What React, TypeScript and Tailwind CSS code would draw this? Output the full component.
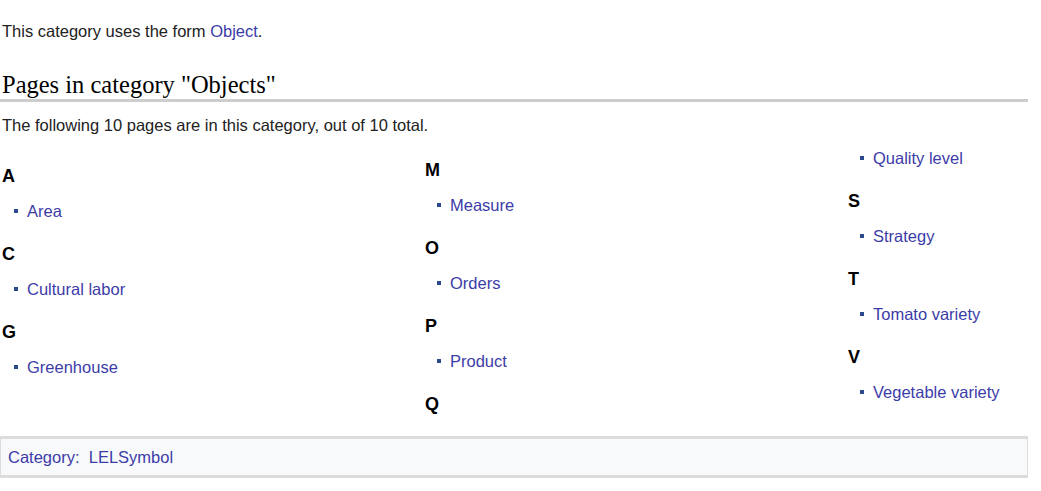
const columns: { letter?: string; items: string[] }[][] = [
  [
    { letter: "A", items: ["Area"] },
    { letter: "C", items: ["Cultural labor"] },
    { letter: "G", items: ["Greenhouse"] },
  ],
  [
    { letter: "M", items: ["Measure"] },
    { letter: "O", items: ["Orders"] },
    { letter: "P", items: ["Product"] },
    { letter: "Q", items: [] },
  ],
  [
    { items: ["Quality level"] },
    { letter: "S", items: ["Strategy"] },
    { letter: "T", items: ["Tomato variety"] },
    { letter: "V", items: ["Vegetable variety"] },
  ],
];

// the first two columns open with a letter heading, the third continues a list
const colPad = ["pt-[18px]", "pt-[12px]", "pt-0"];

function Group({ letter, items }: { letter?: string; items: string[] }) {
  return (
    <div className="flex flex-col gap-[15px]">
      {letter && (
        <h3 className="h-[20px] text-[18px] font-bold leading-[20px] text-black">{letter}</h3>
      )}
      {items.map((item) => (
        <div key={item} className="flex h-[20px] items-center pl-[12px]">
          <span className="mr-[9px] h-[4px] w-[4px] bg-[#2a4a8c]" />
          <a className="text-[16.5px] leading-[20px] text-[#3c3ca8]">{item}</a>
        </div>
      ))}
    </div>
  );
}

export default function App() {
  return (
    <div
      className="h-[491px] w-[1041px] bg-white text-[#222]"
      style={{ fontFamily: '"Liberation Sans", Arial, sans-serif' }}
    >
      <div className="w-[1028px] pt-[21px]">
        <p className="pl-[2px] text-[16.5px] leading-[20px]">
          This category uses the form <a className="text-[#3c3ca8]">Object</a>.
        </p>

        <h2
          className="mt-[30px] border-b-[3px] border-[#cdcdcd] pl-[2px] text-[24.5px] leading-[28px] text-black"
          style={{ fontFamily: '"Liberation Serif", "Times New Roman", serif' }}
        >
          Pages in category "Objects"
        </h2>
        <p className="mt-[13px] pl-[2px] text-[16.5px] leading-[20px]">
          The following 10 pages are in this category, out of 10 total.
        </p>

        <div className="mt-[13px] grid h-[288px] grid-cols-[423px_423px_1fr]">
          {columns.map((groups, ci) => (
            <div key={ci} className={`flex flex-col gap-[23px] pl-[2px] ${colPad[ci]}`}>
              {groups.map((g, gi) => (
                <Group key={gi} letter={g.letter} items={g.items} />
              ))}
            </div>
          ))}
        </div>

        <div className="flex h-[42px] items-center border-x border-y-[3px] border-[#dcdcdc] bg-[#f8f9fa] pl-[7px] text-[16.5px] text-[#3c3ca8]">
          <a>Category</a>
          <span>:&nbsp;&nbsp;</span>
          <a>LELSymbol</a>
        </div>
      </div>
    </div>
  );
}
